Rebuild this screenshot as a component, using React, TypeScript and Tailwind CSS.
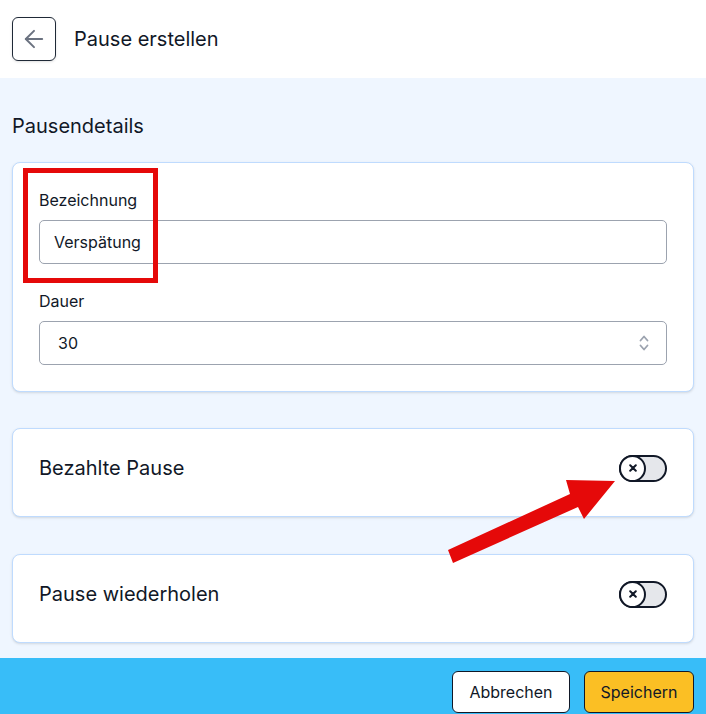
import React from 'react';
import { ArrowLeft } from 'lucide-react';

function Toggle() {
  return (
    <div className="relative h-[27px] w-[48px] rounded-full border-2 border-[#111827] bg-[#e5e7eb]">
      <div className="absolute -left-[2px] -top-[2px] grid h-[27px] w-[27px] place-items-center rounded-full border-2 border-[#111827] bg-white">
        <svg width="8" height="8" viewBox="0 0 8 8" fill="none">
          <path d="M1.2 1.2l5.6 5.6M6.8 1.2L1.2 6.8" stroke="#111827" strokeWidth="2" strokeLinecap="round" />
        </svg>
      </div>
    </div>
  );
}

function ToggleCard({ title }: { title: string }) {
  return (
    <div className="rounded-lg border border-[#bfdbfe] bg-white px-[26px] pt-[25px] pb-[34px] shadow-sm">
      <div className="flex h-7 items-center justify-between">
        <span className="text-xl text-[#111827]">{title}</span>
        <Toggle />
      </div>
    </div>
  );
}

export default function App() {
  return (
    <div className="relative min-h-screen bg-[#eff6ff] font-['Inter',sans-serif] text-[#111827]">
      {/* header */}
      <header className="flex h-[78px] items-center gap-[18px] bg-white px-3">
        <button className="grid h-[44px] w-[44px] place-items-center rounded-md border border-[#1f2937] shadow-sm">
          <ArrowLeft size={28} strokeWidth={1.7} className="text-[#6b7280]" />
        </button>
        <h1 className="text-xl">Pause erstellen</h1>
      </header>

      <main className="px-3 pt-[34px] pb-[15px]">
        <h2 className="mb-[22px] text-xl">Pausendetails</h2>

        <div className="rounded-lg border border-[#bfdbfe] bg-white px-[26px] pt-[25px] pb-[26px] shadow-sm">
          <label className="mb-2 block text-base">Bezeichnung</label>
          <div className="flex h-[44px] items-center rounded-[5px] border border-[#9ca3af] px-[14px] text-base">
            Verspätung
          </div>

          <label className="mt-[25px] mb-2 block text-base">Dauer</label>
          <div className="flex h-[44px] items-center justify-between rounded-[5px] border border-[#9ca3af] pl-[18px] pr-[17px] text-base">
            <span>30</span>
            <svg width="10" height="18" viewBox="0 0 10 18" fill="none" stroke="#9ca3af" strokeWidth="1.8" strokeLinecap="round" strokeLinejoin="round">
              <path d="M1.5 6.5 5 2.5l3.5 4" />
              <path d="M1.5 11.5 5 15.5l3.5-4" />
            </svg>
          </div>
        </div>

        <div className="mt-[36px] flex flex-col gap-[37px]">
          <ToggleCard title="Bezahlte Pause" />
          <ToggleCard title="Pause wiederholen" />
        </div>
      </main>

      <footer className="flex justify-end gap-[14px] bg-[#38bdf8] px-3 pt-[13px] pb-[13px]">
        <button className="h-[42px] w-[118px] rounded-md border border-[#111827] bg-white text-base">Abbrechen</button>
        <button className="h-[42px] w-[110px] rounded-md border border-[#111827] bg-[#fbbf24] text-base">Speichern</button>
      </footer>

      {/* annotations */}
      <div className="pointer-events-none absolute left-[23px] top-[168px] h-[115px] w-[135px] border-[5px] border-[#e50909]" />
      <svg className="pointer-events-none absolute left-0 top-0" width="706" height="714">
        <polygon points="448,550 570,494 566,480 615,481 584,519 578,507 453,563" fill="#e50909" />
      </svg>
    </div>
  );
}
